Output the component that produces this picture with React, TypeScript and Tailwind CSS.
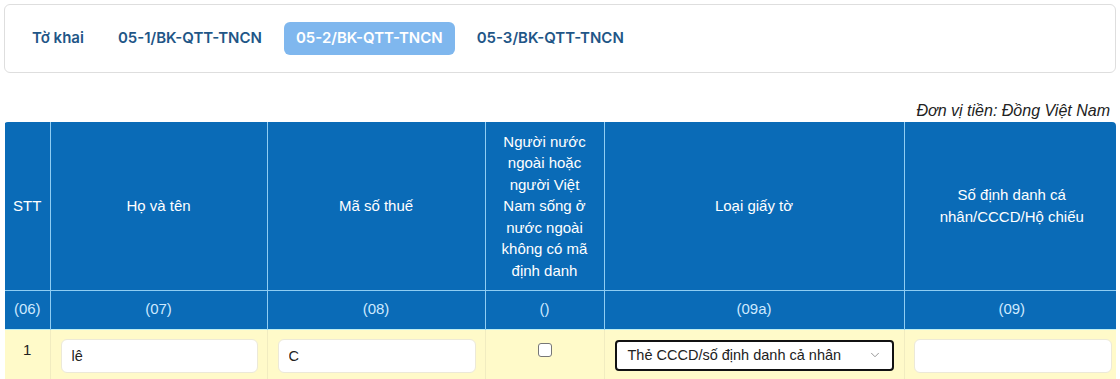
import { ChevronDown } from 'lucide-react'

const tabs = ['Tờ khai', '05-1/BK-QTT-TNCN', '05-2/BK-QTT-TNCN', '05-3/BK-QTT-TNCN']
const activeTab = 2

const columns = [
  { label: 'STT', code: '(06)', width: 'w-[45px]' },
  { label: 'Họ và tên', code: '(07)', width: 'w-[217px]' },
  { label: 'Mã số thuế', code: '(08)', width: 'w-[218px]' },
  {
    label: 'Người nước ngoài hoặc người Việt Nam sống ở nước ngoài không có mã định danh',
    code: '()',
    width: 'w-[119px]',
  },
  { label: 'Loại giấy tờ', code: '(09a)', width: 'w-[300px]' },
  { label: 'Số định danh cá nhân/CCCD/Hộ chiếu', code: '(09)', width: 'w-[215px]' },
]

function TextInput({ value }: { value: string }) {
  return (
    <input
      defaultValue={value}
      className="h-[34px] w-full rounded-md border border-[#ece9d8] bg-white px-[10px] text-[14.5px] text-[#222] outline-none"
    />
  )
}

export default function App() {
  return (
    <div className="bg-white px-[4px] pt-[4px] font-['Liberation_Sans',Arial,sans-serif]">
      {/* tab bar */}
      <div className="rounded-md border border-[#dedede] bg-white px-[15px] py-[17px]">
        <div className="flex items-center gap-[10px] font-['Inter',sans-serif] text-[15px] font-semibold">
          {tabs.map((t, i) => (
            <button
              key={t}
              className={
                i === activeTab
                  ? 'h-[33px] rounded-md bg-[#7fb7ee] px-[12px] text-white'
                  : 'h-[33px] rounded-md px-[12px] text-[#1f5687]'
              }
            >
              {t}
            </button>
          ))}
        </div>
      </div>

      <p className="mt-[27px] pr-[6px] text-right text-[16px] italic leading-[22px] text-[#222]">
        Đơn vị tiền: Đồng Việt Nam
      </p>

      <div className="overflow-hidden rounded-t-[4px] pl-[1px]">
        <table className="w-[1114px] table-fixed border-collapse text-[15px]">
          <colgroup>
            {columns.map((c) => (
              <col key={c.code + c.label} className={c.width} />
            ))}
          </colgroup>
          <thead>
            <tr className="h-[168px] bg-[#0a6bb7] text-white">
              {columns.map((c, i) => (
                <th
                  key={c.label}
                  className={
                    'border-[#8fcdf3] px-[8px] text-center font-normal leading-[21.5px] ' +
                    (i > 0 ? 'border-l' : '')
                  }
                >
                  {c.label}
                </th>
              ))}
            </tr>
            <tr className="h-[39px] bg-[#0a6bb7] text-[#cde9ff]">
              {columns.map((c, i) => (
                <th
                  key={c.code + i}
                  className={
                    'border-t border-[#8fcdf3] text-center font-normal ' + (i > 0 ? 'border-l' : '')
                  }
                >
                  {c.code}
                </th>
              ))}
            </tr>
          </thead>
          <tbody>
            <tr className="h-[54px] border-t border-[#bfeef0] bg-[#fffac9] align-top text-[15px] leading-[21px] text-[#222]">
              <td className="pt-[9px] text-center">1</td>
              <td className="border-l border-[#f1ecc0] pl-[10px] pr-[9px] pt-[9px]">
                <TextInput value="lê" />
              </td>
              <td className="border-l border-[#f1ecc0] pl-[10px] pr-[9px] pt-[9px]">
                <TextInput value="C" />
              </td>
              <td className="border-l border-[#f1ecc0] pt-[13px] text-center">
                <input
                  type="checkbox"
                  className="h-[14px] w-[14px] appearance-none rounded-[3px] border border-[#767676] bg-white align-top"
                />
              </td>
              <td className="border-l border-[#f1ecc0] pl-[10px] pr-[10px] pt-[10px]">
                <div className="flex h-[31px] items-center justify-between rounded-[4px] border-2 border-[#111] bg-white pl-[11px] pr-[10px]">
                  <span className="text-[14.5px] text-[#222]">Thẻ CCCD/số định danh cả nhân</span>
                  <ChevronDown className="h-[14px] w-[14px] text-[#888]" strokeWidth={1.5} />
                </div>
              </td>
              <td className="border-l border-[#f1ecc0] pl-[9px] pr-[7px] pt-[9px]">
                <TextInput value="" />
              </td>
            </tr>
          </tbody>
        </table>
      </div>
    </div>
  )
}
